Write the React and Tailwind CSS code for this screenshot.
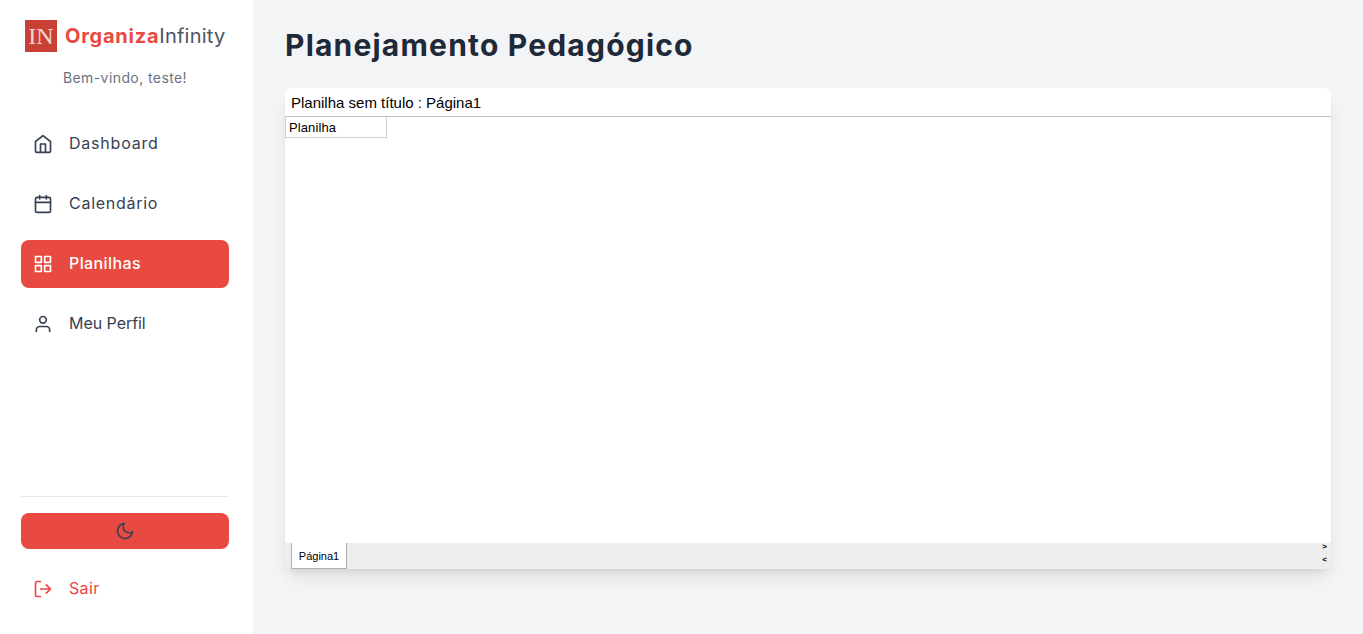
function Icon({ children }) {
  return (
    <svg className="size-5 shrink-0" viewBox="0 0 24 24" fill="none" stroke="currentColor" strokeWidth="2" strokeLinecap="round" strokeLinejoin="round">
      {children}
    </svg>
  );
}

const items = [
  {
    label: 'Dashboard',
    tracking: 'tracking-[0.78px]',
    icon: (
      <Icon>
        <path d="M3 9l9-7 9 7v11a2 2 0 0 1-2 2H5a2 2 0 0 1-2-2z" />
        <path d="M9 22V12h6v10" />
      </Icon>
    ),
  },
  {
    label: 'Calendário',
    tracking: 'tracking-[0.73px]',
    icon: (
      <Icon>
        <rect x="3" y="4" width="18" height="18" rx="2" />
        <path d="M16 2v4M8 2v4M3 10h18" />
      </Icon>
    ),
  },
  {
    label: 'Planilhas',
    tracking: 'tracking-[0.4px]',
    active: true,
    icon: (
      <Icon>
        <rect x="3" y="3" width="7" height="7" />
        <rect x="14" y="3" width="7" height="7" />
        <rect x="14" y="14" width="7" height="7" />
        <rect x="3" y="14" width="7" height="7" />
      </Icon>
    ),
  },
  {
    label: 'Meu Perfil',
    tracking: 'tracking-[-0.05px]',
    icon: (
      <Icon>
        <path d="M20 21v-2a4 4 0 0 0-4-4H8a4 4 0 0 0-4 4v2" />
        <circle cx="12" cy="7" r="4" />
      </Icon>
    ),
  },
];

function NavItem({ label, icon, tracking, active }) {
  return (
    <a className={active ? 'flex h-12 items-center gap-4 rounded-lg bg-[#e84a41] px-3 font-medium text-white' : 'flex h-12 items-center gap-4 rounded-lg px-3 text-gray-700'}>
      {icon}
      <span className={`pb-0.5 ${tracking}`}>{label}</span>
    </a>
  );
}

function Sidebar() {
  return (
    <aside className="flex h-full w-[253px] shrink-0 flex-col bg-white pr-6 pl-[21px]">
      <div className="mt-5 flex h-8 items-center gap-2 pl-1">
        <div className="flex size-8 shrink-0 items-center justify-center bg-[#c84134]">
          <span className="font-['Liberation_Serif',serif] text-[24px] leading-8 text-[#f6d5d0]">IN</span>
        </div>
        <div className="text-xl leading-8 whitespace-nowrap text-gray-600">
          <span className="font-bold tracking-[0.75px] text-[#e84a41]">Organiza</span>
          <span className="tracking-[0.25px]">Infinity</span>
        </div>
      </div>
      <p className="mt-4 text-center text-sm leading-5 tracking-[0.41px] text-gray-500">Bem-vindo, teste!</p>
      <nav className="mt-8 flex flex-col gap-3">
        {items.map((item) => (
          <NavItem key={item.label} {...item} />
        ))}
      </nav>
      <div className="mt-auto border-t border-gray-200 pt-4 pb-[21px]">
        <button className="flex h-9 w-full items-center justify-center rounded-lg bg-[#e84a41] text-gray-700">
          <Icon>
            <path d="M21 12.79A9 9 0 1 1 11.21 3 7 7 0 0 0 21 12.79z" />
          </Icon>
        </button>
        <a className="mt-4 flex h-12 items-center gap-4 px-3 text-[#ef4444]">
          <Icon>
            <path d="M9 21H5a2 2 0 0 1-2-2V5a2 2 0 0 1 2-2h4" />
            <path d="M16 17l5-5-5-5M21 12H9" />
          </Icon>
          <span className="pb-0.5 tracking-[0.35px]">Sair</span>
        </a>
      </div>
    </aside>
  );
}

export default function App() {
  return (
    <div className="flex h-[634px] w-full overflow-hidden bg-gray-100 font-['Inter',sans-serif]">
      <Sidebar />
      <main className="flex-1 px-8 pt-[27px]">
        <h1 className="text-3xl leading-9 font-bold tracking-[1.2px] text-gray-800">Planejamento Pedagógico</h1>
        <section className="mt-[25px] flex h-[481px] flex-col overflow-hidden rounded-lg bg-white font-['Liberation_Sans',sans-serif] text-black shadow-lg">
          <header className="h-[29px] border-b border-[#c0c0c0] pl-1.5 text-[15px] leading-[30px]">Planilha sem título : Página1</header>
          <div className="flex-1">
            <div className="h-[21px] w-[102px] border-r border-b border-l border-[#d0d0d0] pl-[3px] text-[13px] leading-[21px] tracking-[0.1px]">Planilha</div>
          </div>
          <footer className="flex h-[26px] justify-between bg-[#eeeeee] pr-1 pl-1.5">
            <div className="w-14 border-r border-b border-l border-[#b0b0b0] bg-white text-center text-[11px] leading-[26px]">Página1</div>
            <div className="flex flex-col text-[8px] leading-2 font-bold">
              <span className="h-[13px]">&gt;</span>
              <span className="h-[13px]">&lt;</span>
            </div>
          </footer>
        </section>
      </main>
    </div>
  );
}
